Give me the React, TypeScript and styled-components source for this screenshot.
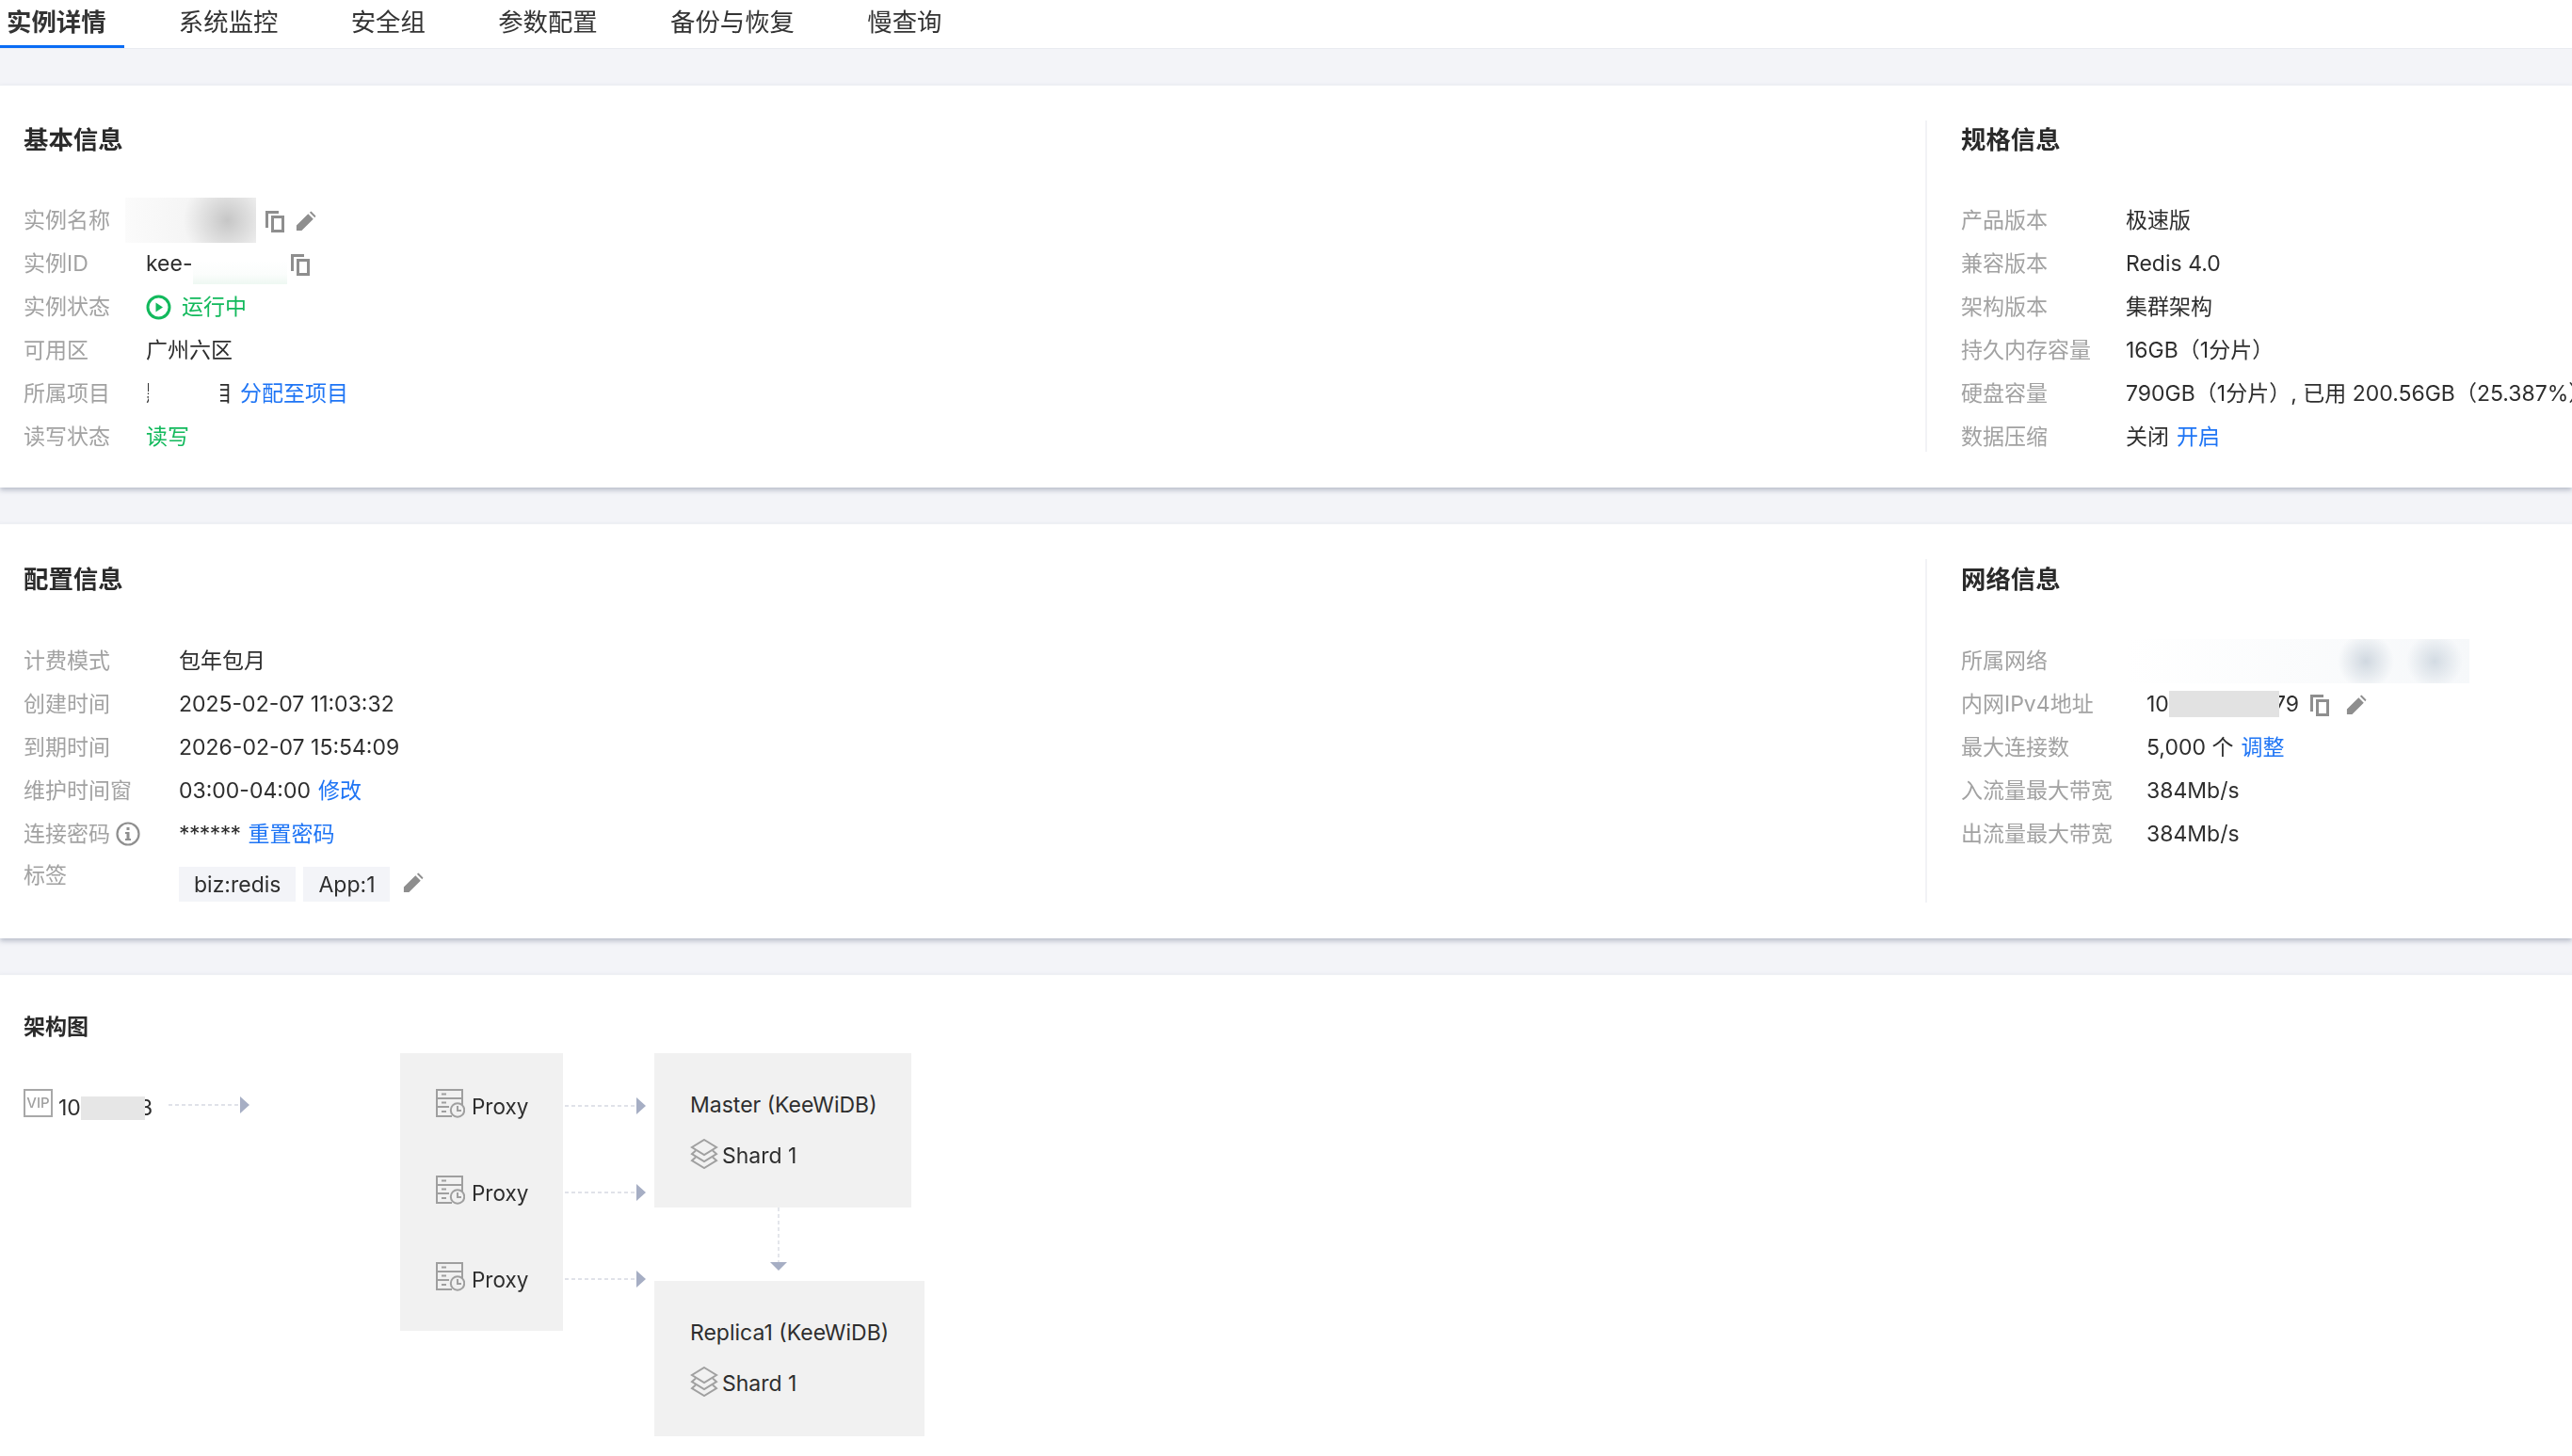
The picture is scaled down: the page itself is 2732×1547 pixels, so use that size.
import * as React from "react";
import styled, { createGlobalStyle } from "styled-components";

const blue = "#1f75f5";
const green = "#12b95c";
const iconGrey = "#8e8e8e";

const Global = createGlobalStyle`
  html, body {
    margin: 0;
    padding: 0;
    background: #f3f4f8;
  }
  body {
    width: 2732px;
    height: 1547px;
    overflow: hidden;
    font-family: Inter, "Noto Sans CJK SC", "Noto Sans", sans-serif;
    color: #2e2e2e;
  }
  * {
    box-sizing: border-box;
  }
`;

// the source capture is an upscaled one, everything in it is a little soft
const Page = styled.div`
  filter: blur(0.45px);
`;

const Tabs = styled.div`
  height: 52px;
  background: #fff;
  border-bottom: 1px solid #e9ebf0;
  display: flex;
  align-items: flex-start;
  gap: 77.3px;
  padding-left: 7px;
`;

const Tab = styled.div<{ $active?: boolean }>`
  position: relative;
  height: 51px;
  line-height: 47px;
  font-size: 26.4px;
  white-space: nowrap;
  color: #333;
  font-weight: ${(p) => (p.$active ? 700 : 400)};
  ${(p) =>
    p.$active &&
    `
    &::after {
      content: "";
      position: absolute;
      left: -7px;
      right: -19px;
      bottom: 0;
      height: 3px;
      background: #0a6cf5;
    }
  `}
`;

const Card = styled.section<{ $height: number; $top?: number }>`
  margin-top: 38px;
  height: ${(p) => p.$height}px;
  background: #fff;
  border-top: 1px solid #eef0f4;
  box-shadow: 0 3px 5px rgba(120, 128, 150, 0.45);
  display: flex;
  padding: ${(p) => p.$top ?? 37}px 0 38px 25px;
`;

const MainColumn = styled.div`
  flex: 1;
  min-width: 0;
`;

const SideColumn = styled.div`
  width: 687px;
  flex: none;
  border-left: 2px solid #f2f3f6;
  padding-left: 36px;
`;

const SectionTitle = styled.h2<{ $tall?: boolean }>`
  margin: 0 0 49px;
  height: ${(p) => (p.$tall ? 42 : 40)}px;
  line-height: ${(p) => (p.$tall ? 42 : 40)}px;
  font-size: 26.4px;
  font-weight: 700;
  color: #2a2a2a;
`;

const DiagramTitle = styled.h3`
  margin: 0;
  height: 38px;
  line-height: 38px;
  font-size: 23px;
  font-weight: 700;
  color: #2a2a2a;
`;

const Rows = styled.div`
  display: flex;
  flex-direction: column;
  gap: 12px;
`;

const Row = styled.div`
  display: flex;
  min-height: 34px;
  align-items: flex-start;
  font-size: 23px;
  line-height: 34px;
  white-space: nowrap;
`;

const Label = styled.div<{ $width: number; $lift?: number }>`
  width: ${(p) => p.$width}px;
  flex: none;
  color: #a2a2a2;
  display: flex;
  align-items: center;
  gap: 6px;
  margin-top: ${(p) => -(p.$lift ?? 0)}px;
`;

const Value = styled.div`
  display: flex;
  align-items: center;
  height: 34px;
  gap: 8px;
`;

const Plain = styled.span`
  color: #2e2e2e;
`;

const Status = styled.span`
  color: ${green};
`;

const StatusLine = styled.span`
  display: flex;
  align-items: center;
  gap: 11px;
`;

const Link = styled.a`
  color: ${blue};
  cursor: pointer;
`;

const Stars = styled.span`
  letter-spacing: -0.6px;
`;

const MaskedText = styled.span`
  position: relative;
  display: inline-block;
`;

const Mask = styled.span`
  position: absolute;
  left: 3px;
  top: 0;
  width: 76px;
  height: 100%;
  background: #fff;
`;

const Redact = styled.span<{ $w: number; $h: number; $bg: string; $pull?: number; $trim?: number }>`
  position: relative;
  display: inline-block;
  flex: none;
  width: ${(p) => p.$w}px;
  height: ${(p) => p.$h}px;
  margin-left: ${(p) => p.$pull ?? 0}px;
  margin-right: ${(p) => -(p.$trim ?? 0)}px;
  background: ${(p) => p.$bg};
`;

const Joined = styled.span`
  display: flex;
  align-items: center;
`;

const IconPair = styled.span<{ $gap: number }>`
  display: flex;
  align-items: center;
  gap: ${(p) => p.$gap}px;
  margin-left: ${(p) => (p.$gap > 10 ? 2 : 0)}px;
`;

const Tag = styled.span`
  height: 37px;
  line-height: 38px;
  margin-top: 6px;
  padding: 0 16px;
  background: #f3f4f8;
  color: #2e2e2e;
`;

const TagList = styled.div`
  display: flex;
  gap: 8px;
  align-items: flex-start;
`;

const TagEdit = styled.span`
  display: flex;
  margin: 10px 0 0 6px;
`;

const Glyph = styled.svg<{ $size: number }>`
  width: ${(p) => p.$size}px;
  height: ${(p) => p.$size}px;
  flex: none;
  display: block;
`;

const ActionGlyph = styled(Glyph)`
  margin-top: 2px;
`;

const CopyIcon = () => (
  <ActionGlyph $size={24} viewBox="0 0 24 24">
    <path
      fill={iconGrey}
      fillRule="evenodd"
      d="M2 1h14v3H5v15H2zM8 6h14v18H8zM11 9v12h8V9z"
    />
  </ActionGlyph>
);

const PencilIcon = () => (
  <ActionGlyph $size={22} viewBox="0 0 24 24">
    <path
      fill={iconGrey}
      d="M1 23v-6L14.500 3.500l6 6L7 23zM16.200 1.800 18 .6l5.400 5.400-1.200 1.800z"
    />
  </ActionGlyph>
);

const RunningIcon = () => (
  <Glyph $size={27} viewBox="0 0 27 27">
    <circle cx="13.500" cy="13.500" r="11.500" fill="none" stroke={green} strokeWidth="3" />
    <path fill={green} d="M10.500 8.500 18 13.500l-7.500 5z" />
  </Glyph>
);

const InfoIcon = () => (
  <Glyph $size={26} viewBox="0 0 26 26">
    <circle cx="13" cy="13" r="11.500" fill="none" stroke="#8f8f8f" strokeWidth="2.200" />
    <rect x="11.500" y="6" width="3" height="3" fill="#8f8f8f" />
    <path fill="#8f8f8f" d="M10 11h4.500v7H16v2h-6v-2h1.500v-5H10z" />
  </Glyph>
);

const ProxyIcon = () => (
  <Glyph $size={31} viewBox="0 0 31 31">
    <g fill="none" stroke="#9f9f9f" strokeWidth="2">
      <path d="M1 1h27v9H1zM1 10h27v9M1 10v19h16M1 19h13" />
      <circle cx="23" cy="22.500" r="7.200" fill="#f1f1f1" />
      <path d="M23 18v5h4" />
    </g>
    <g fill="#9f9f9f">
      <rect x="6" y="4.500" width="5" height="2" />
      <rect x="6" y="13.500" width="5" height="2" />
      <rect x="6" y="23" width="5" height="2" />
    </g>
  </Glyph>
);

const ShardIcon = () => (
  <Glyph $size={32} viewBox="0 0 32 32">
    <g fill="none" stroke="#a0a0a0" strokeWidth="2">
      <path d="M16 1 29 9 16 17 3 9z" />
      <path d="M7 12.500 3 16l13 8 13-8-4-3.500" />
      <path d="M7 19.500 3 23l13 8 13-8-4-3.500" />
    </g>
  </Glyph>
);

const Flow = styled.svg<{ $w: number; $h: number }>`
  display: block;
  flex: none;
  width: ${(p) => p.$w}px;
  height: ${(p) => p.$h}px;
`;

const ArrowRight = ({ width }: { width: number }) => (
  <Flow $w={width} $h={20} viewBox={`0 0 ${width} 20`}>
    <line x1="0" y1="10" x2={width - 10} y2="10" stroke="#d6d9e2" strokeWidth="1.500" strokeDasharray="4 3" />
    <path fill="#a6aec4" d={`M${width - 10} 1l10 9-10 9z`} />
  </Flow>
);

const ArrowDown = () => (
  <Flow $w={20} $h={67} viewBox="0 0 20 67">
    <line x1="10" y1="0" x2="10" y2="58" stroke="#dcdee5" strokeWidth="1.500" strokeDasharray="4 3" />
    <path fill="#a6aec4" d="M1 58h18l-9 9z" />
  </Flow>
);

const Diagram = styled.div`
  display: flex;
  margin-top: 9px;
`;

const VipColumn = styled.div`
  width: 400px;
  flex: none;
  padding-top: 38px;
  display: flex;
  align-items: flex-start;
`;

const VipBadge = styled.span`
  width: 31px;
  height: 30px;
  flex: none;
  border: 2px solid #a8a8a8;
  color: #a0a0a0;
  font-size: 15px;
  font-weight: 500;
  line-height: 25px;
  text-align: center;
`;

const VipAddress = styled.span`
  display: flex;
  align-items: center;
  height: 40px;
  width: 117px;
  padding-left: 6px;
  font-size: 23px;
  flex: none;
`;

const VipArrow = styled.span`
  display: block;
  margin: 7px 0 0 6px;
`;

const ProxyPanel = styled.div`
  width: 173px;
  height: 295px;
  flex: none;
  background: #f1f1f1;
  padding: 38px 0 0 38px;
  display: flex;
  flex-direction: column;
  gap: 61px;
`;

const ProxyRow = styled.div`
  display: flex;
  align-items: center;
  gap: 7px;
  height: 31px;
  font-size: 22.5px;
`;

const NudgedText = styled.span<{ $down: number }>`
  padding-top: ${(p) => p.$down}px;
`;

const Connectors = styled.div`
  width: 97px;
  flex: none;
  padding: 46px 0 0 2px;
  display: flex;
  flex-direction: column;
  gap: 72px;
`;

const NodeColumn = styled.div`
  display: flex;
  flex-direction: column;
  align-items: flex-start;
`;

const Node = styled.div<{ $w: number; $h: number }>`
  width: ${(p) => p.$w}px;
  height: ${(p) => p.$h}px;
  background: #f1f1f1;
  padding: 40px 0 0 38px;
  font-size: 23px;
`;

const NodeTitle = styled.div`
  line-height: 30px;
  white-space: nowrap;
`;

const ShardRow = styled.div`
  display: flex;
  align-items: center;
  gap: 3px;
  margin-top: 21px;
  margin-left: -1px;
  height: 32px;
`;

const Replication = styled.div`
  height: 78px;
  padding-left: 122px;
`;

const nameBlur = "radial-gradient(circle at 78% 50%, #c6c6c6 0, #d6d6d6 14%, #f5f5f5 42%, #fbfbfb 100%)";
const vpcBlur =
  "radial-gradient(circle 30px at 254px 50%, #d0d8e0, transparent), radial-gradient(circle 30px at 327px 50%, #d3dbe3, transparent), linear-gradient(90deg, #fff, #f6f8fa)";

const basic: [string, React.ReactNode][] = [
  [
    "实例名称",
    <>
      <Redact $w={139} $h={48} $pull={-22} $bg={nameBlur} />
      <IconPair $gap={10}>
        <CopyIcon />
        <PencilIcon />
      </IconPair>
    </>,
  ],
  [
    "实例ID",
    <>
      <Joined>
        <Plain>kee-</Plain>
        <Redact $w={100} $h={43} $trim={6} $bg="linear-gradient(#ffffff 40%, #fbfdfc 75%, #eef8f2)" />
      </Joined>
      <CopyIcon />
    </>,
  ],
  [
    "实例状态",
    <StatusLine>
      <RunningIcon />
      <Status>运行中</Status>
    </StatusLine>,
  ],
  ["可用区", <Plain>广州六区</Plain>],
  [
    "所属项目",
    <>
      <MaskedText>
        默认项目
        <Mask />
      </MaskedText>
      <Link>分配至项目</Link>
    </>,
  ],
  ["读写状态", <Status>读写</Status>],
];

const spec: [string, React.ReactNode][] = [
  ["产品版本", "极速版"],
  ["兼容版本", "Redis 4.0"],
  ["架构版本", "集群架构"],
  ["持久内存容量", "16GB（1分片）"],
  ["硬盘容量", "790GB（1分片）, 已用 200.56GB（25.387%）"],
  [
    "数据压缩",
    <>
      关闭 <Link>开启</Link>
    </>,
  ],
];

const config: [React.ReactNode, React.ReactNode][] = [
  ["计费模式", "包年包月"],
  ["创建时间", "2025-02-07 11:03:32"],
  ["到期时间", "2026-02-07 15:54:09"],
  [
    "维护时间窗",
    <>
      03:00-04:00 <Link>修改</Link>
    </>,
  ],
  [
    <>
      连接密码
      <InfoIcon />
    </>,
    <>
      <Stars>******</Stars> <Link>重置密码</Link>
    </>,
  ],
];

const network: [string, React.ReactNode][] = [
  ["所属网络", <Redact $w={364} $h={47} $pull={-21} $bg={vpcBlur} />],
  [
    "内网IPv4地址",
    <>
      <Joined>
        10
        <Redact $w={117} $h={28} $trim={6} $bg="#e2e2e2" />
        79
      </Joined>
      <IconPair $gap={16}>
        <CopyIcon />
        <PencilIcon />
      </IconPair>
    </>,
  ],
  [
    "最大连接数",
    <>
      5,000 个 <Link>调整</Link>
    </>,
  ],
  ["入流量最大带宽", "384Mb/s"],
  ["出流量最大带宽", "384Mb/s"],
];

const InfoRows = ({ items, labelWidth }: { items: [React.ReactNode, React.ReactNode][]; labelWidth: number }) => (
  <>
    {items.map(([label, value], i) => (
      <Row key={i}>
        <Label $width={labelWidth}>{label}</Label>
        <Value>{value}</Value>
      </Row>
    ))}
  </>
);

const tabs = ["实例详情", "系统监控", "安全组", "参数配置", "备份与恢复", "慢查询"];

export default function App() {
  return (
    <Page>
      <Global />
      <Tabs>
        {tabs.map((t, i) => (
          <Tab key={t} $active={i === 0}>
            {t}
          </Tab>
        ))}
      </Tabs>

      <Card $height={428}>
        <MainColumn>
          <SectionTitle>基本信息</SectionTitle>
          <Rows>
            <InfoRows items={basic} labelWidth={130} />
          </Rows>
        </MainColumn>
        <SideColumn>
          <SectionTitle>规格信息</SectionTitle>
          <Rows>
            <InfoRows items={spec} labelWidth={175} />
          </Rows>
        </SideColumn>
      </Card>

      <Card $height={441}>
        <MainColumn>
          <SectionTitle $tall>配置信息</SectionTitle>
          <Rows>
            <InfoRows items={config} labelWidth={165} />
            <Row>
              <Label $width={165} $lift={2}>
                标签
              </Label>
              <TagList>
                <Tag>biz:redis</Tag>
                <Tag>App:1</Tag>
                <TagEdit>
                  <PencilIcon />
                </TagEdit>
              </TagList>
            </Row>
          </Rows>
        </MainColumn>
        <SideColumn>
          <SectionTitle $tall>网络信息</SectionTitle>
          <Rows>
            <InfoRows items={network} labelWidth={197} />
          </Rows>
        </SideColumn>
      </Card>

      <Card $height={512} $top={36}>
        <MainColumn>
          <DiagramTitle>架构图</DiagramTitle>
          <Diagram>
            <VipColumn>
              <VipBadge>VIP</VipBadge>
              <VipAddress>
                10
                <Redact $w={68} $h={25} $trim={6} $bg="#e6e6e6" />3
              </VipAddress>
              <VipArrow>
                <ArrowRight width={86} />
              </VipArrow>
            </VipColumn>
            <ProxyPanel>
              {[0, 1, 2].map((n) => (
                <ProxyRow key={n}>
                  <ProxyIcon />
                  <NudgedText $down={5}>Proxy</NudgedText>
                </ProxyRow>
              ))}
            </ProxyPanel>
            <Connectors>
              {[0, 1, 2].map((n) => (
                <ArrowRight key={n} width={86} />
              ))}
            </Connectors>
            <NodeColumn>
              <Node $w={273} $h={164}>
                <NodeTitle>Master (KeeWiDB)</NodeTitle>
                <ShardRow>
                  <ShardIcon />
                  <NudgedText $down={4}>Shard 1</NudgedText>
                </ShardRow>
              </Node>
              <Replication>
                <ArrowDown />
              </Replication>
              <Node $w={287} $h={165}>
                <NodeTitle>Replica1 (KeeWiDB)</NodeTitle>
                <ShardRow>
                  <ShardIcon />
                  <NudgedText $down={4}>Shard 1</NudgedText>
                </ShardRow>
              </Node>
            </NodeColumn>
          </Diagram>
        </MainColumn>
      </Card>
    </Page>
  );
}
